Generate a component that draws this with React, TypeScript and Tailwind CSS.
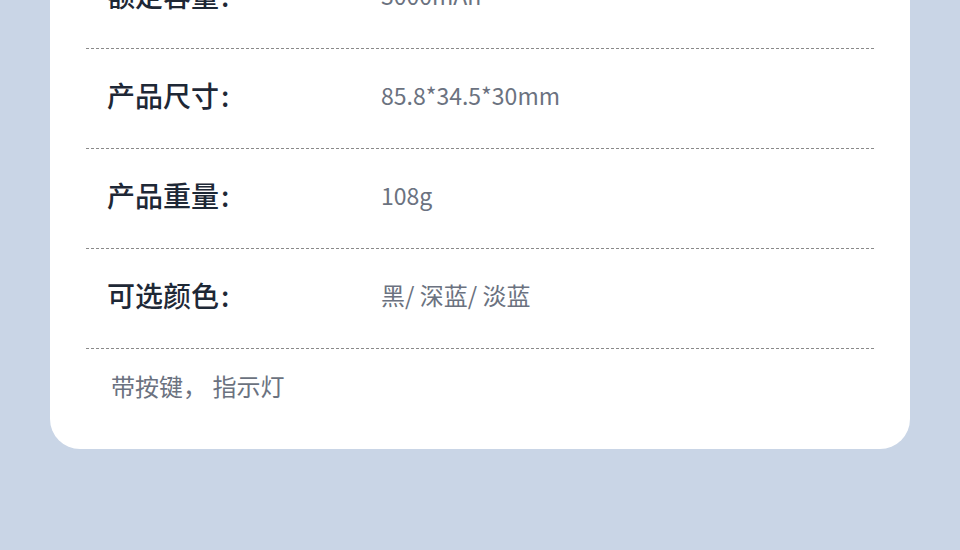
import React from 'react';

const rows = [
  { label: '额定容量', value: '3000mAh', cjk: false },
  { label: '产品尺寸', value: '85.8*34.5*30mm', cjk: false },
  { label: '产品重量', value: '108g', cjk: false },
  { label: '可选颜色', value: '黑/ 深蓝/ 淡蓝', cjk: true },
];

export default function App() {
  return (
    <div
      className="min-h-[550px] w-full overflow-hidden bg-[#c9d5e6]"
      style={{ fontFamily: '"Noto Sans CJK SC", "Noto Sans", sans-serif' }}
    >
      <div className="mx-[50px] -mt-[51px] rounded-[30px] bg-white px-[36px]">
        {rows.map((row) => (
          <div
            key={row.label}
            className="flex h-[100px] items-center border-b border-dashed border-[#8a8a8a] pb-[7px]"
          >
            <div className="w-[295px] shrink-0 pl-[21px] text-[28px] font-medium leading-none text-[#1e2836]">
              {row.label}
              <span className="ml-[2px]">:</span>
            </div>
            <div
              className={
                row.cjk
                  ? 'text-[24px] leading-none text-[#6b7280]'
                  : 'text-[23px] leading-none text-[#6b7280]'
              }
            >
              {row.value}
            </div>
          </div>
        ))}
        <div className="pt-[25px] pb-[51px] pl-[25px] text-[24px] leading-[24px] text-[#6b7280]">
          带按键， 指示灯
        </div>
      </div>
    </div>
  );
}
